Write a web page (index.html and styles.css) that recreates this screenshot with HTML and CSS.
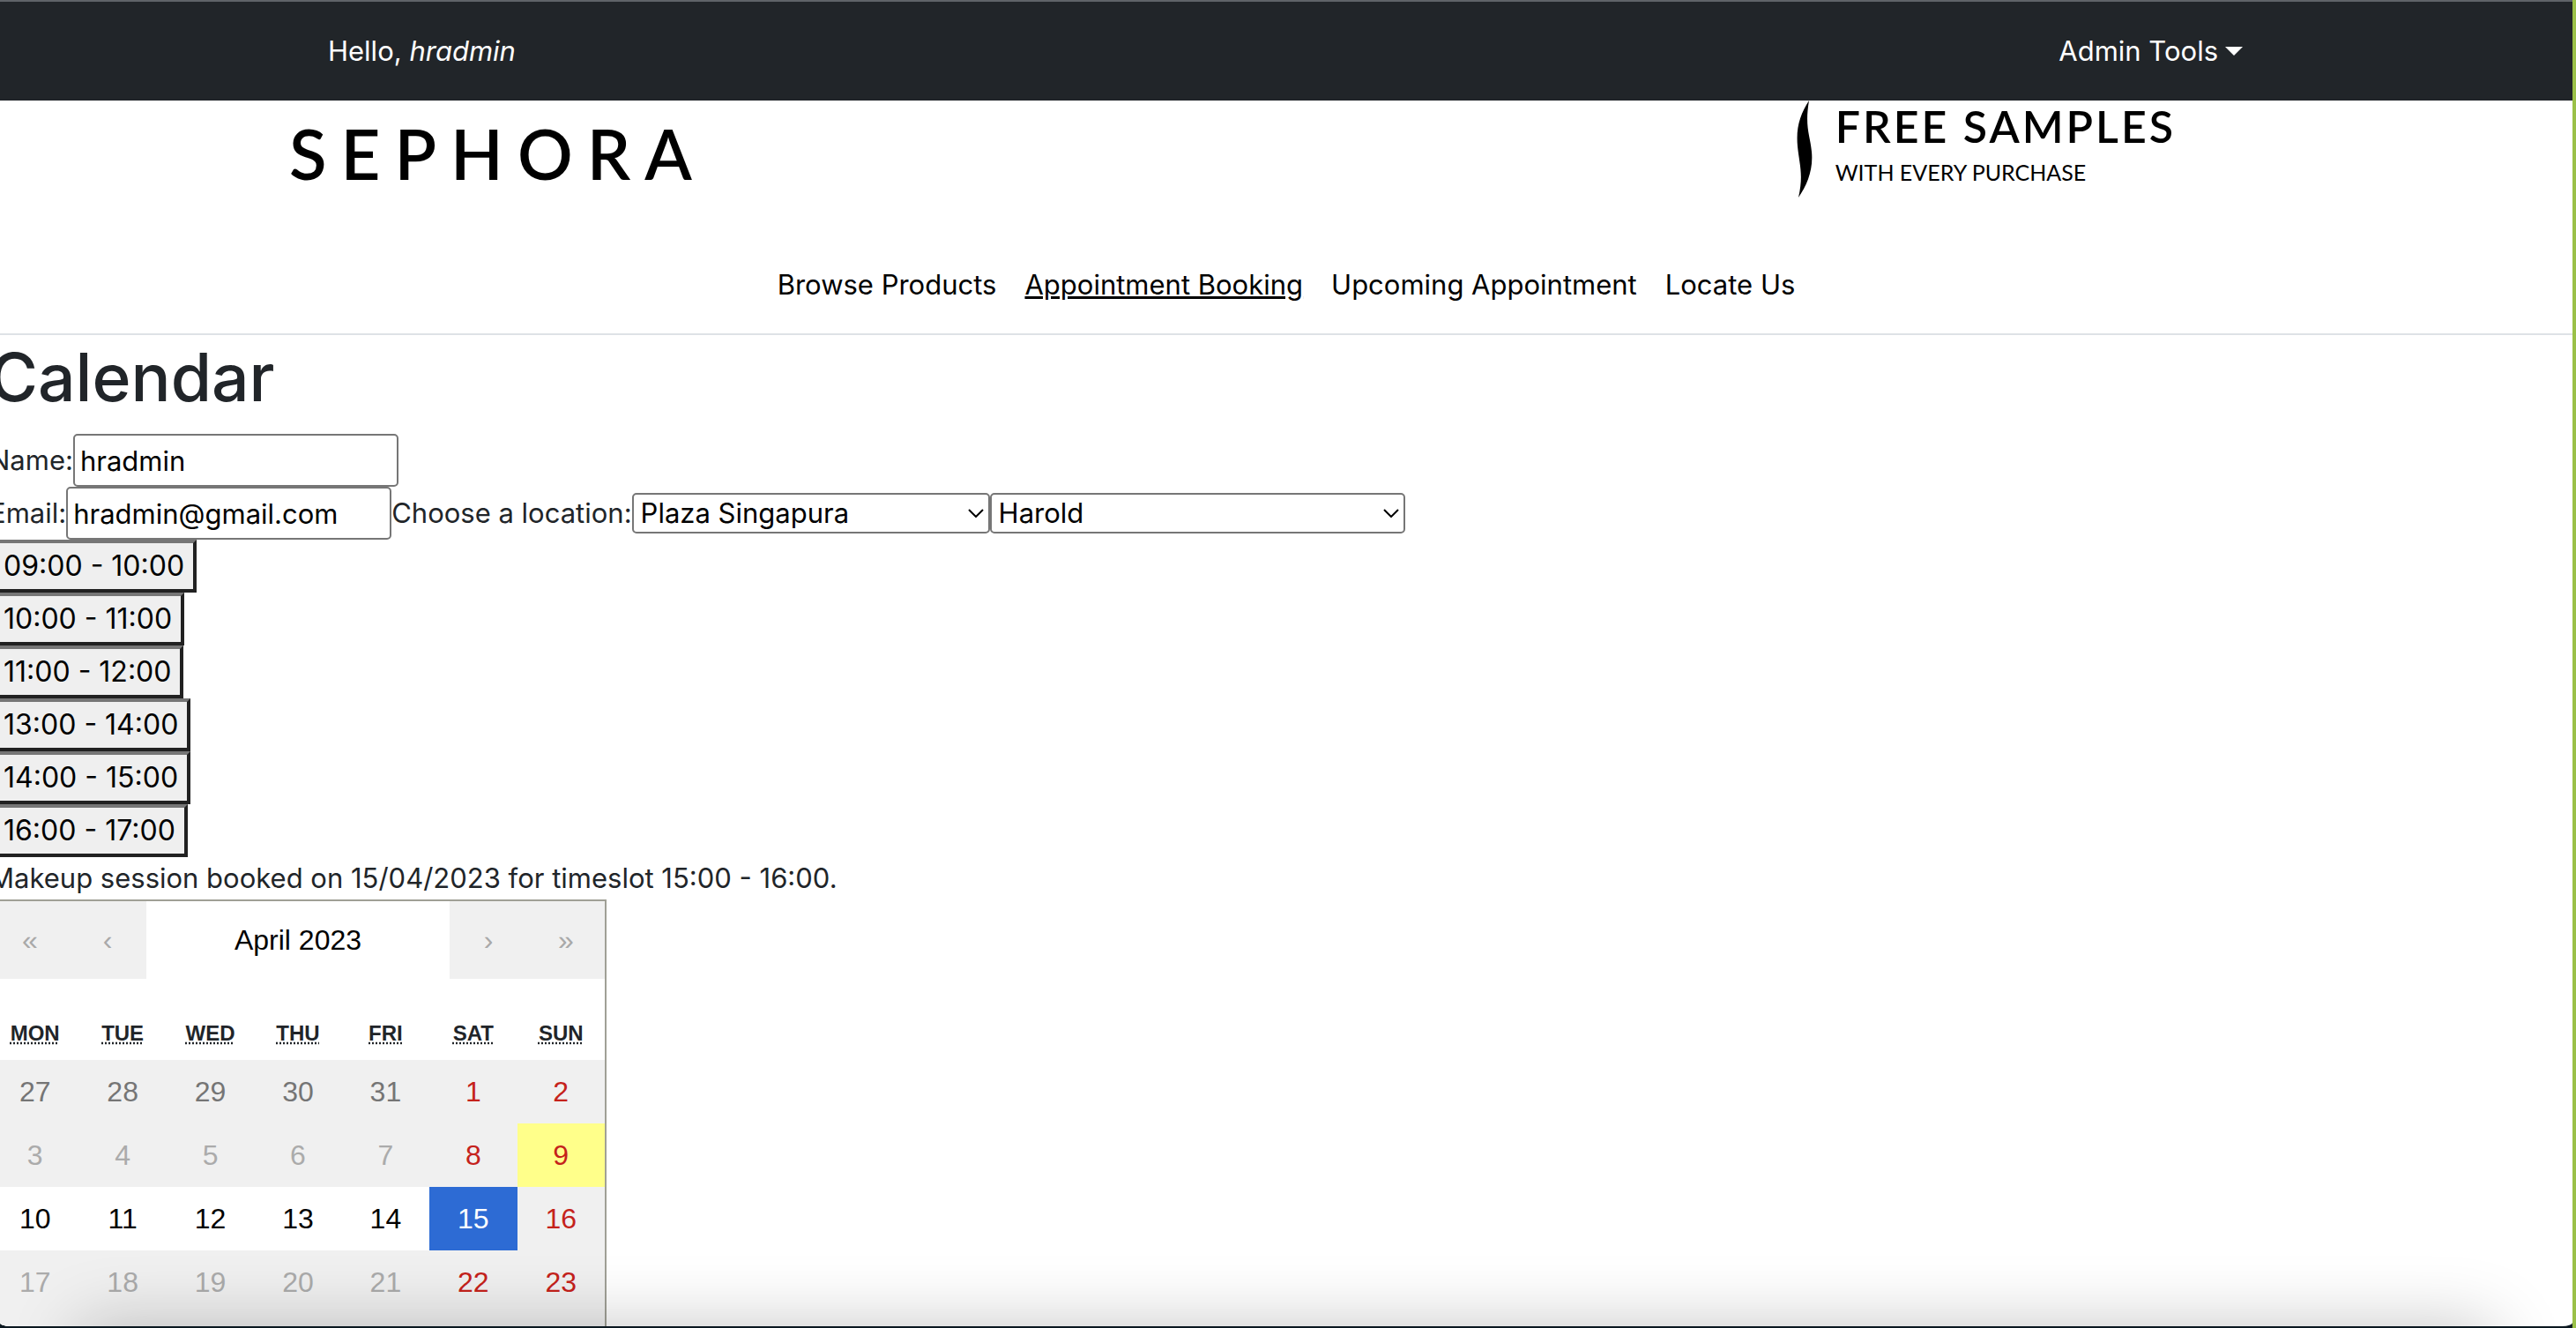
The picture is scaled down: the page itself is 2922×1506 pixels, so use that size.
FILE: index.html
```html
<!DOCTYPE html>
<html lang="en">
<head>
<meta charset="utf-8">
<title>Appointment Booking</title>
<link rel="stylesheet" href="styles.css">
</head>
<body>
<div class="window">
  <nav class="topbar">
    <span>Hello, <em>hradmin</em></span>
    <button class="dropdown" type="button">Admin Tools<span class="caret"></span></button>
  </nav>
  <header class="header">
    <div class="brand-row">
      <a class="logo" href="#">SEPHORA</a>
      <div class="promo">
        <svg class="flame" viewBox="0 0 18 110" aria-hidden="true"><path d="M14 0C4 16-1 30 1 52C3 72 8 84 2 110C12 96 19 78 17 58C15 38 9 30 14 0Z"/></svg>
        <div class="promo-text">
          <span class="promo-title">FREE SAMPLES</span>
          <span class="promo-sub">WITH EVERY PURCHASE</span>
        </div>
      </div>
    </div>
    <nav class="links">
      <a href="#">Browse Products</a>
      <a class="active" href="#">Appointment Booking</a>
      <a href="#">Upcoming Appointment</a>
      <a href="#">Locate Us</a>
    </nav>
  </header>
  <main class="content">
    <h1>Calendar</h1>
    <form>
      <div class="field-row">
        <label for="name">Name:</label><input id="name" type="text" value="hradmin">
      </div>
      <div class="field-row">
        <label for="email">Email:</label><input id="email" type="text" value="hradmin@gmail.com">
        <label for="location">Choose a location:</label>
        <div class="select select-location"><select id="location"><option>Plaza Singapura</option></select><svg viewBox="0 0 18 10" aria-hidden="true"><path d="M1 1L9 9L17 1"/></svg></div>
        <div class="select select-artist"><select aria-label="Artist"><option>Harold</option></select><svg viewBox="0 0 18 10" aria-hidden="true"><path d="M1 1L9 9L17 1"/></svg></div>
      </div>
      <div class="slots">
        <button type="button">09:00 - 10:00</button>
        <button type="button">10:00 - 11:00</button>
        <button type="button">11:00 - 12:00</button>
        <button type="button">13:00 - 14:00</button>
        <button type="button">14:00 - 15:00</button>
        <button type="button">16:00 - 17:00</button>
      </div>
    </form>
    <p>Makeup session booked on 15/04/2023 for timeslot 15:00 - 16:00.</p>
    <section class="calendar">
      <div class="calendar-nav">
        <button type="button" disabled>«</button>
        <button type="button" disabled>‹</button>
        <button class="month" type="button">April 2023</button>
        <button type="button" disabled>›</button>
        <button type="button" disabled>»</button>
      </div>
      <table>
        <thead>
          <tr><th><abbr title="Monday">MON</abbr></th><th><abbr title="Tuesday">TUE</abbr></th><th><abbr title="Wednesday">WED</abbr></th><th><abbr title="Thursday">THU</abbr></th><th><abbr title="Friday">FRI</abbr></th><th><abbr title="Saturday">SAT</abbr></th><th><abbr title="Sunday">SUN</abbr></th></tr>
        </thead>
        <tbody>
          <tr class="other"><td>27</td><td>28</td><td>29</td><td>30</td><td>31</td><td class="weekend">1</td><td class="weekend">2</td></tr>
          <tr class="off"><td>3</td><td>4</td><td>5</td><td>6</td><td>7</td><td class="weekend">8</td><td class="weekend today">9</td></tr>
          <tr class="open"><td>10</td><td>11</td><td>12</td><td>13</td><td>14</td><td class="chosen">15</td><td class="weekend closed">16</td></tr>
          <tr class="off"><td>17</td><td>18</td><td>19</td><td>20</td><td>21</td><td class="weekend">22</td><td class="weekend">23</td></tr>
          <tr class="off"><td>24</td><td>25</td><td>26</td><td>27</td><td>28</td><td class="weekend">29</td><td class="weekend">30</td></tr>
        </tbody>
      </table>
    </section>
  </main>
  <div class="shade"></div>
</div>
</body>
</html>
```
FILE: styles.css
```css
* { box-sizing: border-box; }
body {
  margin: 0;
  background: linear-gradient(to right, #0b1820 calc(100% - 4px), #9bc148 0);
  color: #212529;
  font: 31px/48px Inter, "Liberation Sans", sans-serif;
}
button, input, select { font: inherit; color: #000; }
.window {
  position: relative;
  height: calc(100vh - 2px);
  margin-right: 4px;
  overflow: hidden;
  background: #fff;
  border-bottom-right-radius: 12px 4px;
  border-bottom-left-radius: 12px 4px;
}
.topbar {
  display: flex;
  justify-content: space-between;
  align-items: center;
  height: 114px;
  padding: 0 374px 0 372px;
  border-top: 2px solid #5f6368;
  background: #212529;
  color: #fff;
}
.dropdown {
  display: flex;
  align-items: center;
  gap: 8px;
  padding: 0;
  border: 0;
  background: none;
  color: #fff;
}
.caret {
  border: 10px solid transparent;
  border-top-color: #fff;
  border-bottom: 0;
}
.header { border-bottom: 2px solid #dee2e6; }
.brand-row {
  display: flex;
  justify-content: space-between;
  align-items: flex-start;
  height: 169px;
  padding: 0 450px 0 328px;
}
.logo {
  padding-top: 12px;
  color: #000;
  font: 600 78px/96px Lato, sans-serif;
  letter-spacing: 16px;
  text-decoration: none;
}
.promo { display: flex; gap: 26px; color: #000; }
.flame { width: 18px; height: 110px; }
.promo-text { display: flex; flex-direction: column; font-family: Lato, sans-serif; }
.promo-title { font-size: 50px; line-height: 58px; font-weight: 600; letter-spacing: 3px; }
.promo-sub { font-size: 25px; line-height: 46px; }
.links {
  display: flex;
  justify-content: center;
  gap: 32px;
  padding: 16px 0 31px;
}
.links a { color: #000; text-decoration: none; }
.links .active { text-decoration: underline; }
.content { margin-left: -12px; }
h1 { margin: 0 0 16px; font-size: 75px; line-height: 96px; font-weight: 500; }
.field-row { display: flex; align-items: center; }
input {
  width: 369px;
  height: 60px;
  padding: 2px 6px;
  border: 2px solid #767676;
  border-radius: 5px;
}
.select { display: grid; align-items: center; }
.select > * { grid-area: 1 / 1; }
.select-location { width: 406px; }
.select-artist { width: 471px; }
select {
  height: 46px;
  padding: 0 8px;
  border: 2px solid #767676;
  border-radius: 5px;
  background: #fff;
  line-height: 40px;
  appearance: none;
}
.select svg {
  width: 18px;
  margin-right: 7px;
  justify-self: end;
  fill: none;
  stroke: #000;
  stroke-width: 2;
  pointer-events: none;
}
.slots { display: flex; flex-direction: column; align-items: flex-start; }
.slots button {
  height: 60px;
  padding: 0 10px 0 12px;
  border: 4px solid;
  border-color: #767676 #212121 #212121 #767676;
  background: #efefef;
  font-size: 32px;
}
p { margin: 0; }
.calendar {
  width: 700px;
  border: 2px solid #a0a096;
  background: #fff;
  font-family: "Liberation Sans", Arial, sans-serif;
  font-size: 32px;
}
.calendar-nav { display: flex; height: 88px; margin-bottom: 32px; }
.calendar-nav button {
  width: 88px;
  padding: 0;
  border: 0;
  background: #f0f0f0;
  color: #a9a9a9;
}
.calendar-nav .month { flex: 1; background: none; color: #000; }
table { width: 100%; table-layout: fixed; border-collapse: collapse; text-align: center; }
th { height: 60px; padding: 0; font-size: 24px; line-height: 36px; }
abbr { text-decoration: underline dotted; }
td { height: 72px; padding: 0; background: #f0f0f0; }
.other td { color: #757575; }
.off td { color: #ababab; }
.open td { background: #fff; color: #000; }
tr .weekend, .open .weekend { color: #c5221b; }
tr .today { background: #ffff8a; }
.open .chosen { background: #2d6bd4; color: #fff; }
.open .closed { background: #f0f0f0; }
/* soft shadow along the bottom edge of the window */
.shade {
  position: absolute;
  top: 100%;
  left: 90px;
  right: 90px;
  height: 100px;
  box-shadow: 0 0 80px rgba(0, 0, 0, .23);
}
```
